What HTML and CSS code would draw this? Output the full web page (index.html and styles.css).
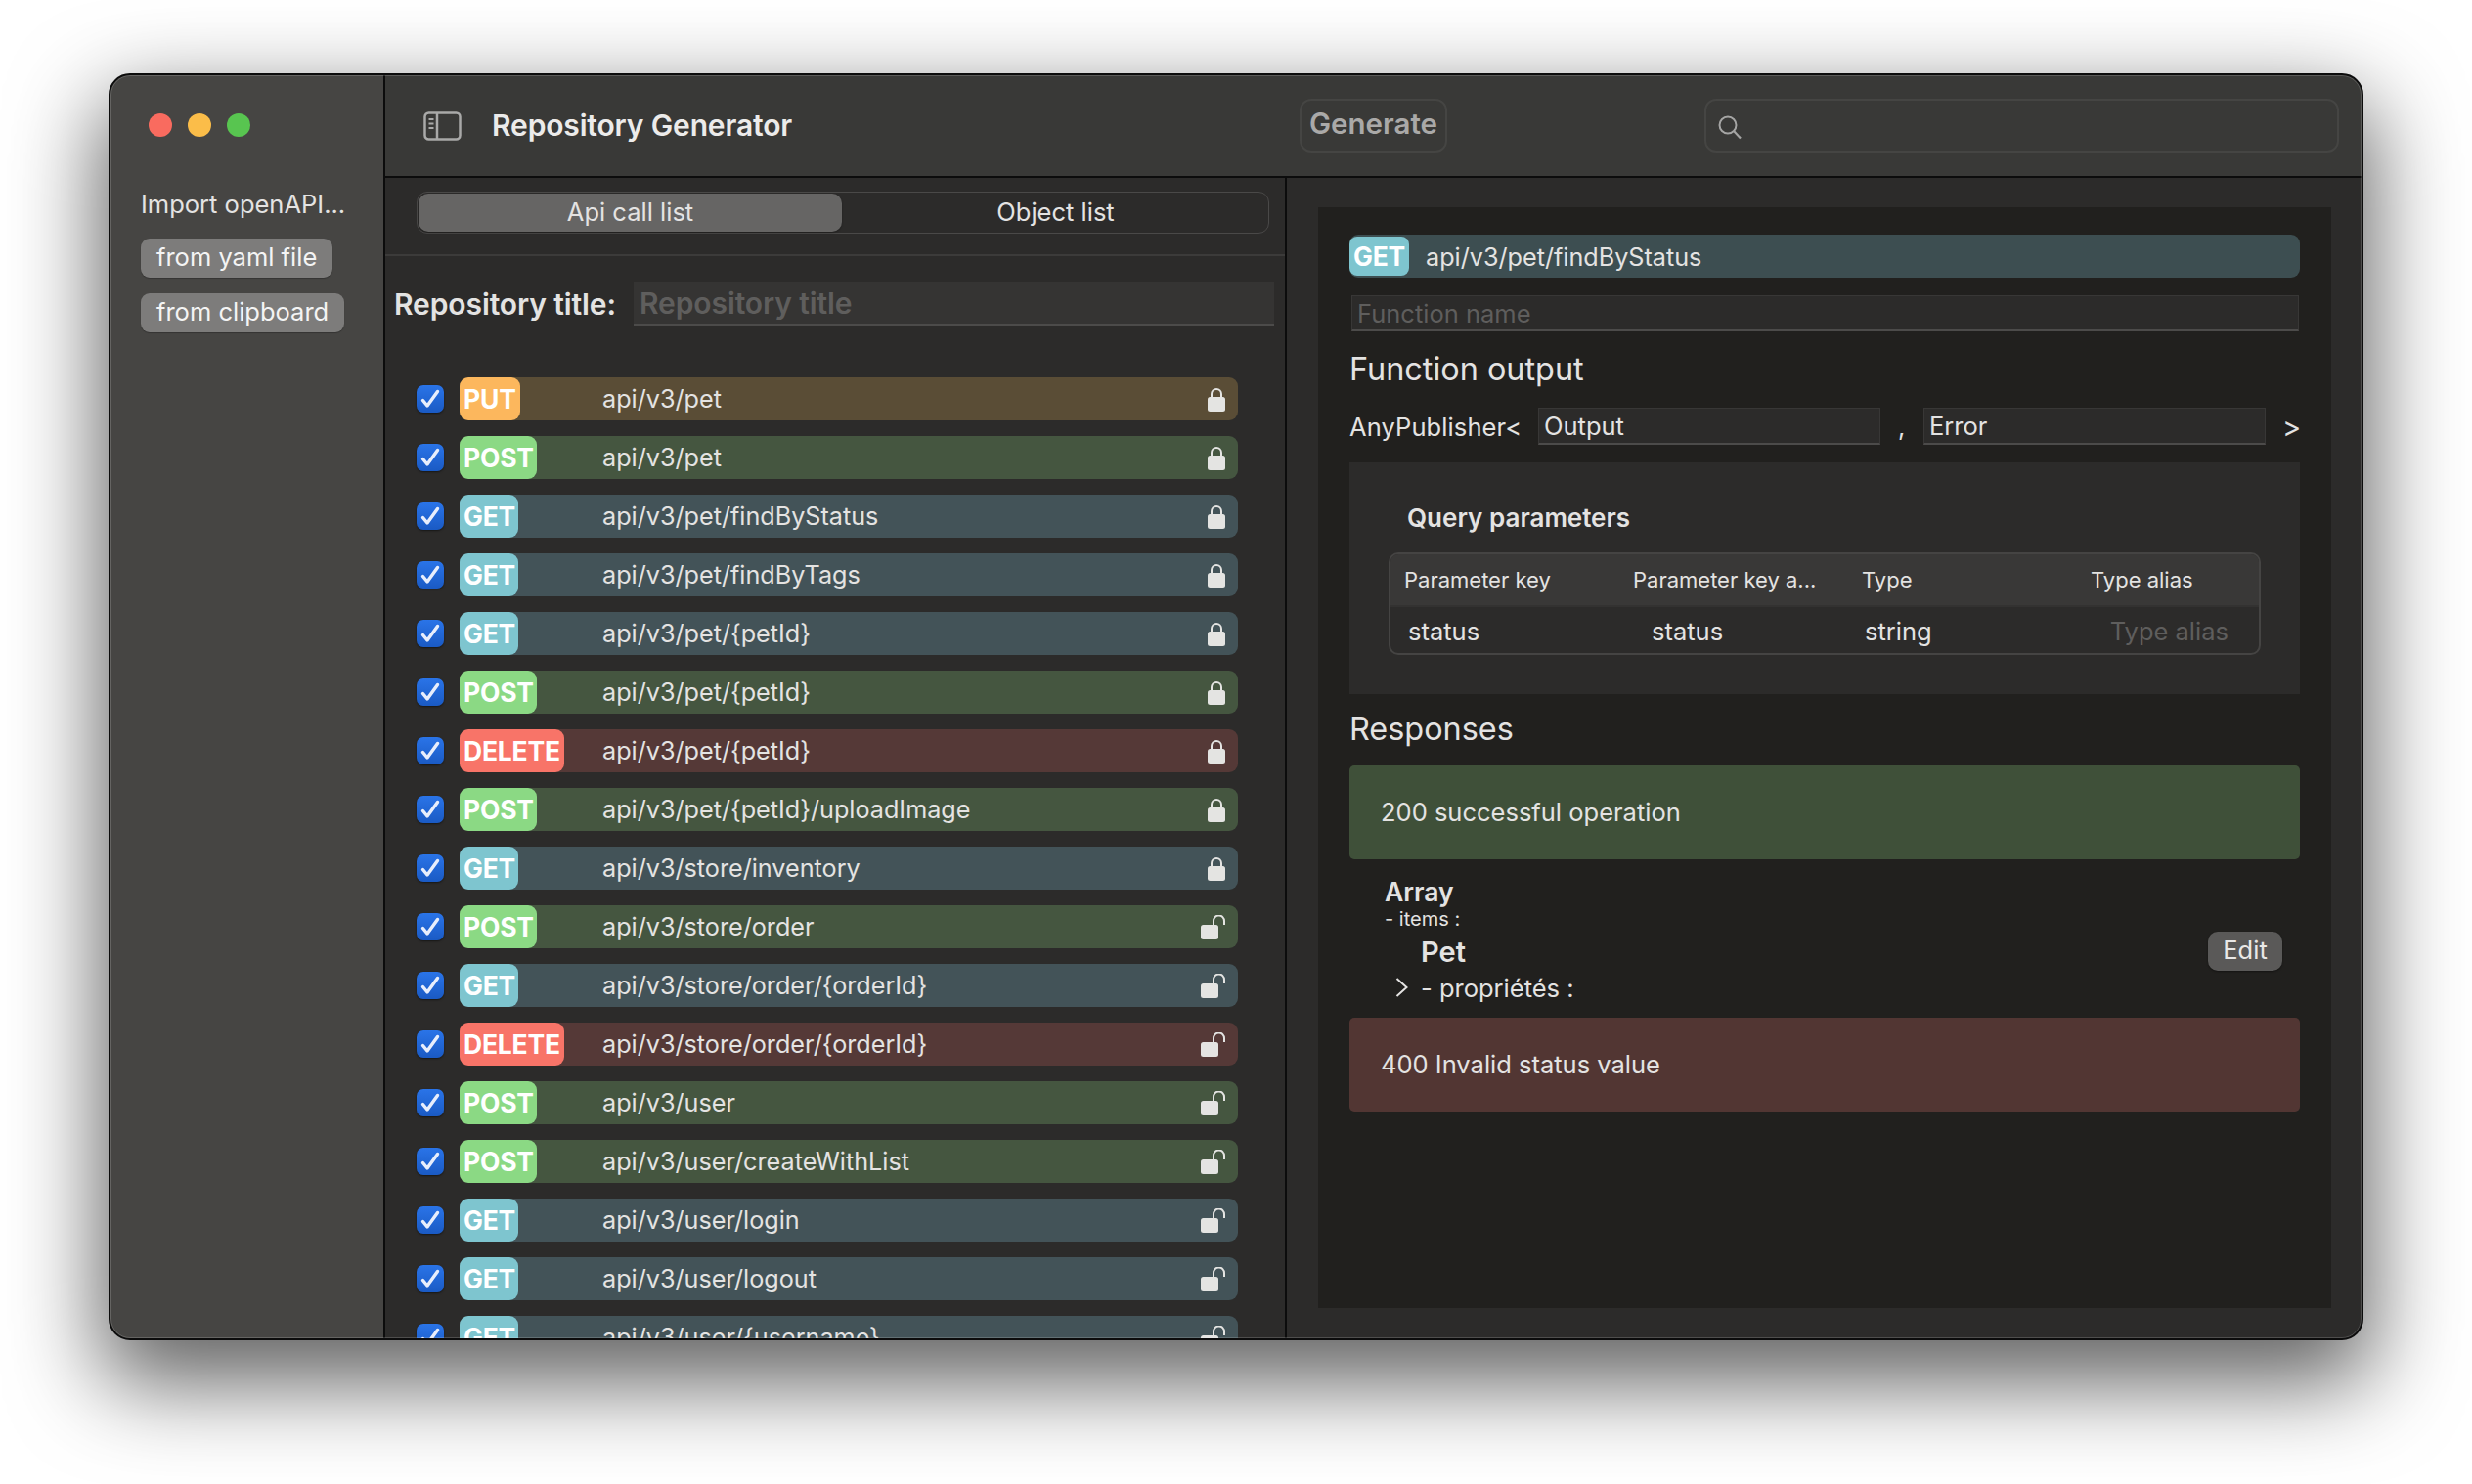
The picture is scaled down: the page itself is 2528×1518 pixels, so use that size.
FILE: index.html
```html
<!DOCTYPE html>
<html lang="en">
<head>
    <meta charset="UTF-8">
    <title>Repository Generator</title>
    <link rel="stylesheet" href="styles.css">
</head>
<body>
    <svg class="defs" width="0" height="0">
        <symbol id="i-lock" viewBox="0 0 18 25">
            <path d="M4 11V7a5 5 0 0 1 10 0v4" fill="none" stroke="currentColor" stroke-width="2"/>
            <rect x="0" y="10" width="18" height="15" rx="2.5" fill="currentColor"/>
        </symbol>
        <symbol id="i-unlock" viewBox="0 0 26 25">
            <path d="M13 11V6a5.5 5.5 0 0 1 11 0v4" fill="none" stroke="currentColor" stroke-width="2"/>
            <rect x="0" y="10" width="18" height="15" rx="2.5" fill="currentColor"/>
        </symbol>
        <symbol id="i-check" viewBox="0 0 28 28">
            <path d="M6.5 15.5L11 21L21.5 6.5" fill="none" stroke="#e8eefc" stroke-width="3.4" stroke-linecap="round" stroke-linejoin="round"/>
        </symbol>
    </svg>

    <div class="window">
        <aside class="sidebar">
            <div class="lights">
                <span class="light red"></span>
                <span class="light yellow"></span>
                <span class="light green"></span>
            </div>
            <div class="import-title">Import openAPI...</div>
            <button class="side-btn">from yaml file</button>
            <button class="side-btn">from clipboard</button>
        </aside>

        <div class="main">
            <header class="titlebar">
                <svg class="sidebar-icon" width="39" height="30" viewBox="0 0 39 30">
                    <rect x="1.5" y="1.5" width="36" height="27" rx="4" fill="none" stroke="#a9a9a8" stroke-width="2.5"/>
                    <path d="M14 2v26" stroke="#a9a9a8" stroke-width="2.5"/>
                    <path d="M5.5 8h5M5.5 12.5h5M5.5 17h5" stroke="#a9a9a8" stroke-width="2"/>
                </svg>
                <h1 class="app-title">Repository Generator</h1>
                <button class="generate">Generate</button>
                <div class="search">
                    <svg width="26" height="26" viewBox="0 0 26 26">
                        <circle cx="11" cy="11" r="8.5" fill="none" stroke="#a5a5a4" stroke-width="2"/>
                        <path d="M17 17l7 7.5" stroke="#a5a5a4" stroke-width="2.2"/>
                    </svg>
                </div>
            </header>

            <div class="content">
                <section class="left">
                    <div class="tabs-bar">
                        <div class="tabs">
                            <div class="tab active">Api call list</div>
                            <div class="tab">Object list</div>
                        </div>
                    </div>
                    <div class="repo-row">
                        <label class="repo-label">Repository title:</label>
                        <div class="repo-input">Repository title</div>
                    </div>
                    <div class="calls">
                        <div class="call"><span class="check"><svg width="28" height="28"><use href="#i-check"/></svg></span><div class="row put"><span class="badge">PUT</span><span class="path">api/v3/pet</span><svg class="lock" width="18" height="25"><use href="#i-lock"/></svg></div></div>
                        <div class="call"><span class="check"><svg width="28" height="28"><use href="#i-check"/></svg></span><div class="row post"><span class="badge">POST</span><span class="path">api/v3/pet</span><svg class="lock" width="18" height="25"><use href="#i-lock"/></svg></div></div>
                        <div class="call"><span class="check"><svg width="28" height="28"><use href="#i-check"/></svg></span><div class="row get"><span class="badge">GET</span><span class="path">api/v3/pet/findByStatus</span><svg class="lock" width="18" height="25"><use href="#i-lock"/></svg></div></div>
                        <div class="call"><span class="check"><svg width="28" height="28"><use href="#i-check"/></svg></span><div class="row get"><span class="badge">GET</span><span class="path">api/v3/pet/findByTags</span><svg class="lock" width="18" height="25"><use href="#i-lock"/></svg></div></div>
                        <div class="call"><span class="check"><svg width="28" height="28"><use href="#i-check"/></svg></span><div class="row get"><span class="badge">GET</span><span class="path">api/v3/pet/{petId}</span><svg class="lock" width="18" height="25"><use href="#i-lock"/></svg></div></div>
                        <div class="call"><span class="check"><svg width="28" height="28"><use href="#i-check"/></svg></span><div class="row post"><span class="badge">POST</span><span class="path">api/v3/pet/{petId}</span><svg class="lock" width="18" height="25"><use href="#i-lock"/></svg></div></div>
                        <div class="call"><span class="check"><svg width="28" height="28"><use href="#i-check"/></svg></span><div class="row delete"><span class="badge">DELETE</span><span class="path">api/v3/pet/{petId}</span><svg class="lock" width="18" height="25"><use href="#i-lock"/></svg></div></div>
                        <div class="call"><span class="check"><svg width="28" height="28"><use href="#i-check"/></svg></span><div class="row post"><span class="badge">POST</span><span class="path">api/v3/pet/{petId}/uploadImage</span><svg class="lock" width="18" height="25"><use href="#i-lock"/></svg></div></div>
                        <div class="call"><span class="check"><svg width="28" height="28"><use href="#i-check"/></svg></span><div class="row get"><span class="badge">GET</span><span class="path">api/v3/store/inventory</span><svg class="lock" width="18" height="25"><use href="#i-lock"/></svg></div></div>
                        <div class="call"><span class="check"><svg width="28" height="28"><use href="#i-check"/></svg></span><div class="row post"><span class="badge">POST</span><span class="path">api/v3/store/order</span><svg class="unlock" width="26" height="25"><use href="#i-unlock"/></svg></div></div>
                        <div class="call"><span class="check"><svg width="28" height="28"><use href="#i-check"/></svg></span><div class="row get"><span class="badge">GET</span><span class="path">api/v3/store/order/{orderId}</span><svg class="unlock" width="26" height="25"><use href="#i-unlock"/></svg></div></div>
                        <div class="call"><span class="check"><svg width="28" height="28"><use href="#i-check"/></svg></span><div class="row delete"><span class="badge">DELETE</span><span class="path">api/v3/store/order/{orderId}</span><svg class="unlock" width="26" height="25"><use href="#i-unlock"/></svg></div></div>
                        <div class="call"><span class="check"><svg width="28" height="28"><use href="#i-check"/></svg></span><div class="row post"><span class="badge">POST</span><span class="path">api/v3/user</span><svg class="unlock" width="26" height="25"><use href="#i-unlock"/></svg></div></div>
                        <div class="call"><span class="check"><svg width="28" height="28"><use href="#i-check"/></svg></span><div class="row post"><span class="badge">POST</span><span class="path">api/v3/user/createWithList</span><svg class="unlock" width="26" height="25"><use href="#i-unlock"/></svg></div></div>
                        <div class="call"><span class="check"><svg width="28" height="28"><use href="#i-check"/></svg></span><div class="row get"><span class="badge">GET</span><span class="path">api/v3/user/login</span><svg class="unlock" width="26" height="25"><use href="#i-unlock"/></svg></div></div>
                        <div class="call"><span class="check"><svg width="28" height="28"><use href="#i-check"/></svg></span><div class="row get"><span class="badge">GET</span><span class="path">api/v3/user/logout</span><svg class="unlock" width="26" height="25"><use href="#i-unlock"/></svg></div></div>
                        <div class="call"><span class="check"><svg width="28" height="28"><use href="#i-check"/></svg></span><div class="row get"><span class="badge">GET</span><span class="path">api/v3/user/{username}</span><svg class="unlock" width="26" height="25"><use href="#i-unlock"/></svg></div></div>
                    </div>
                </section>

                <section class="right">
                    <div class="panel">
                        <div class="endpoint">
                            <span class="endpoint-badge">GET</span>
                            <span class="endpoint-path">api/v3/pet/findByStatus</span>
                        </div>
                        <div class="field fn-name">Function name</div>
                        <h2 class="heading fn-heading">Function output</h2>
                        <div class="output-row">
                            <span class="any">AnyPublisher&lt;</span>
                            <div class="field output-field">Output</div>
                            <span class="comma">,</span>
                            <div class="field output-field">Error</div>
                            <span class="close">&gt;</span>
                        </div>

                        <div class="query">
                            <div class="query-title">Query parameters</div>
                            <div class="table">
                                <div class="thead">
                                    <span>Parameter key</span>
                                    <span>Parameter key a...</span>
                                    <span>Type</span>
                                    <span>Type alias</span>
                                </div>
                                <div class="tbody">
                                    <span class="cell-a">status</span>
                                    <span class="cell-b">status</span>
                                    <span class="cell-c">string</span>
                                    <span class="cell-d">Type alias</span>
                                </div>
                            </div>
                        </div>

                        <h2 class="heading resp-heading">Responses</h2>
                        <div class="resp ok">200 successful operation</div>
                        <div class="schema">
                            <div class="schema-type">Array</div>
                            <div class="schema-items">- items :</div>
                            <div class="schema-obj">
                                <span class="schema-name">Pet</span>
                                <button class="edit">Edit</button>
                            </div>
                            <div class="schema-props">
                                <svg width="15" height="20" viewBox="0 0 15 20">
                                    <path d="M2.5 1l10 9-10 9" fill="none" stroke="#e4e3e2" stroke-width="2"/>
                                </svg>
                                <span>- propriétés :</span>
                            </div>
                        </div>
                        <div class="resp bad">400 Invalid status value</div>
                    </div>
                </section>
            </div>
        </div>
    </div>
</body>
</html>
```

FILE: styles.css
```css
* { box-sizing: border-box; }
html, body { margin: 0; height: 100%; }
body { background: #fff; padding: 75px 0 0 111px; overflow: hidden; font-family: Inter, "Noto Sans", sans-serif; color: #e4e3e2; font-size: 25.5px; }
.defs { position: absolute; }
h1, h2 { margin: 0; font-weight: 400; }
button { font-family: inherit; border: none; padding: 0; color: inherit; }

.window { width: 2306px; height: 1296px; display: flex; overflow: hidden; border: 2px solid #0c0c0c; border-radius: 22px; background: #2c2b2a; box-shadow: 0 36px 92px 8px rgba(0,0,0,0.62); position: relative; }
.window::after { content: ""; position: absolute; inset: 0; border: 1.5px solid rgba(255,255,255,0.17); border-radius: 20px; pointer-events: none; }

/* sidebar */
.sidebar { width: 281px; flex: none; background: #464543; border-right: 2px solid #0c0c0c; padding: 39px 0 0 31px; }
.lights { display: flex; gap: 16px; padding-left: 8px; }
.light { width: 24px; height: 24px; border-radius: 50%; }
.light.red { background: #f96b5f; }
.light.yellow { background: #fbbd49; }
.light.green { background: #58c550; }
.import-title { margin: 51px 0 17px 0; line-height: 36px; white-space: nowrap; }
.side-btn { display: block; height: 40px; padding: 0 16px 3px; margin-bottom: 16px; background: #7d7c7b; border-radius: 9px; font-size: 25.5px; color: #f4f4f4; box-shadow: 0 1px 1px rgba(0,0,0,0.25); }

/* title bar */
.main { flex: 1; min-width: 0; display: flex; flex-direction: column; }
.titlebar { height: 105px; flex: none; display: flex; align-items: center; background: #393937; border-bottom: 2px solid #0c0c0c; padding: 0 23px 0 39px; }
.sidebar-icon { flex: none; margin-right: 31px; }
.app-title { flex: 1; padding-bottom: 2px; font-size: 30px; font-weight: 600; color: #ecebea; letter-spacing: -0.15px; }
.generate { width: 151px; height: 55px; flex: none; padding-bottom: 5px; background: none; border: 2px solid #454543; border-radius: 12px; font-size: 29.5px; font-weight: 600; color: #aaa9a8; }
.search { width: 649px; height: 55px; flex: none; margin-left: 263px; border: 2px solid #454543; border-radius: 12px; display: flex; align-items: center; padding-left: 11px; padding-top: 2px; }

/* left pane */
.content { flex: 1; display: flex; min-height: 0; }
.left { width: 922px; flex: none; border-right: 2px solid #0c0c0c; overflow: hidden; }
.tabs-bar { height: 80px; padding: 14px 0 0 32px; border-bottom: 2px solid #3c3b3a; }
.tabs { width: 872px; height: 43px; display: flex; padding: 1px; background: #2c2b2a; border: 1px solid #4a4948; border-radius: 11px; }
.tab { flex: 1; display: flex; align-items: center; justify-content: center; padding: 0 0 2px 2px; border-radius: 10px; }
.tab.active { flex: none; width: 433px; padding-left: 0; background: #666564; box-shadow: 0 1px 2px rgba(0,0,0,0.3); }
.repo-row { display: flex; align-items: center; padding: 26px 11px 0 9px; }
.repo-label { width: 245px; flex: none; font-size: 30px; font-weight: 600; letter-spacing: -0.1px; white-space: nowrap; }
.repo-input { flex: 1; height: 45px; padding-left: 6px; background: #353433; border-bottom: 2px solid #4c4b4a; font-size: 30px; font-weight: 600; line-height: 44px; color: #5f5e5d; letter-spacing: -0.1px; }
.calls { padding: 53px 48px 0 32px; }
.call { display: flex; align-items: center; gap: 16px; margin-bottom: 16px; }
.check { width: 28px; height: 28px; flex: none; border-radius: 7px; background: linear-gradient(#2a74e8, #1a5ac4); box-shadow: 0 1px 2px rgba(0,0,0,0.5); }
.check svg { display: block; }
.row { flex: 1; height: 44px; display: grid; grid-template-columns: 146px 1fr auto; align-items: center; border-radius: 9px; padding-right: 12px; }
.row.put { background: #5a4d36; }
.row.post { background: #455640; }
.row.get { background: #435358; }
.row.delete { background: #553937; }
.badge { height: 44px; padding-left: 4px; border-radius: 9px; font-size: 26.5px; font-weight: 700; line-height: 44px; color: #fff; letter-spacing: -0.2px; }
.put .badge { width: 62px; background: #fcb75d; }
.post .badge { width: 79px; background: #8bd984; }
.get .badge { width: 60px; background: #7ec5cf; }
.delete .badge { width: 107px; background: #f87468; }
.path { font-size: 25.2px; white-space: nowrap; }
.lock, .unlock { display: block; color: #e4e4e2; }
.lock { margin-right: 1px; }

/* right pane */
.right { flex: 1; padding: 30px 31px 31px 32px; min-width: 0; }
.panel { height: 100%; padding: 28px 32px 0 32px; background: #21201e; }
.endpoint { height: 44px; display: flex; align-items: center; background: #3d4e51; border-radius: 9px; }
.endpoint-badge { width: 61px; height: 40px; padding-left: 4px; background: #7ec5cf; border-radius: 8px; font-size: 26.5px; font-weight: 700; line-height: 40px; color: #fff; letter-spacing: -0.2px; }
.endpoint-path { margin-left: 17px; padding-top: 1px; font-size: 25.2px; }
.field { background: #2c2b2a; border: 1px solid #383736; border-bottom: 2px solid #4c4b4a; }
.fn-name { height: 37px; margin: 18px 1px 0 2px; padding-left: 5px; font-size: 25.5px; line-height: 35px; color: #5f5e5d; }
.heading { height: 40px; font-size: 32.4px; line-height: 40px; }
.fn-heading { margin: 19px 0; }
.output-row { height: 38px; display: flex; align-items: center; }
.any { width: 193px; flex: none; letter-spacing: 0.1px; }
.output-field { width: 350px; height: 38px; flex: none; padding-left: 5px; line-height: 35px; }
.comma { width: 44px; flex: none; padding-left: 18px; }
.close { margin-left: 17px; font-size: 29px; }
.query { height: 237px; margin-top: 18px; padding: 42px 40px 0 40px; background: #2c2b2a; }
.query-title { height: 30px; margin-left: 19px; font-size: 26px; font-weight: 600; line-height: 30px; }
.table { height: 105px; margin-top: 20px; border: 2px solid #454443; border-radius: 10px; overflow: hidden; }
.thead { height: 54px; display: grid; grid-template-columns: repeat(4, 234px); padding-left: 14px; align-items: center; background: #393837; border-bottom: 2px solid #333231; font-size: 22px; }
.tbody { display: grid; grid-template-columns: 249px 218px 234px 1fr; height: 49px; align-items: center; padding: 0 31px 0 18px; }
.cell-d { text-align: right; color: #5f5e5d; }
.resp-heading { margin: 16px 0 17px; }
.resp { height: 96px; padding-left: 32px; border-radius: 5px; line-height: 96px; }
.resp.ok { background: #3f5039; }
.resp.bad { background: #523633; }
.schema { height: 162px; padding: 18px 18px 0 36px; }
.schema-type { height: 30px; font-size: 26.5px; font-weight: 600; line-height: 30px; }
.schema-items { height: 22px; margin-top: 2px; font-size: 20px; line-height: 22px; }
.schema-obj { height: 40px; margin-top: 2px; display: flex; justify-content: space-between; align-items: center; padding-left: 37px; }
.schema-name { font-size: 29px; font-weight: 600; }
.edit { width: 76px; height: 40px; padding-bottom: 3px; background: #5a5958; border-radius: 10px; font-size: 25.5px; color: #e9e8e7; box-shadow: 0 1px 2px rgba(0,0,0,0.4); }
.schema-props { height: 30px; margin-top: 2px; display: flex; align-items: center; gap: 12px; padding-left: 10px; }
```
